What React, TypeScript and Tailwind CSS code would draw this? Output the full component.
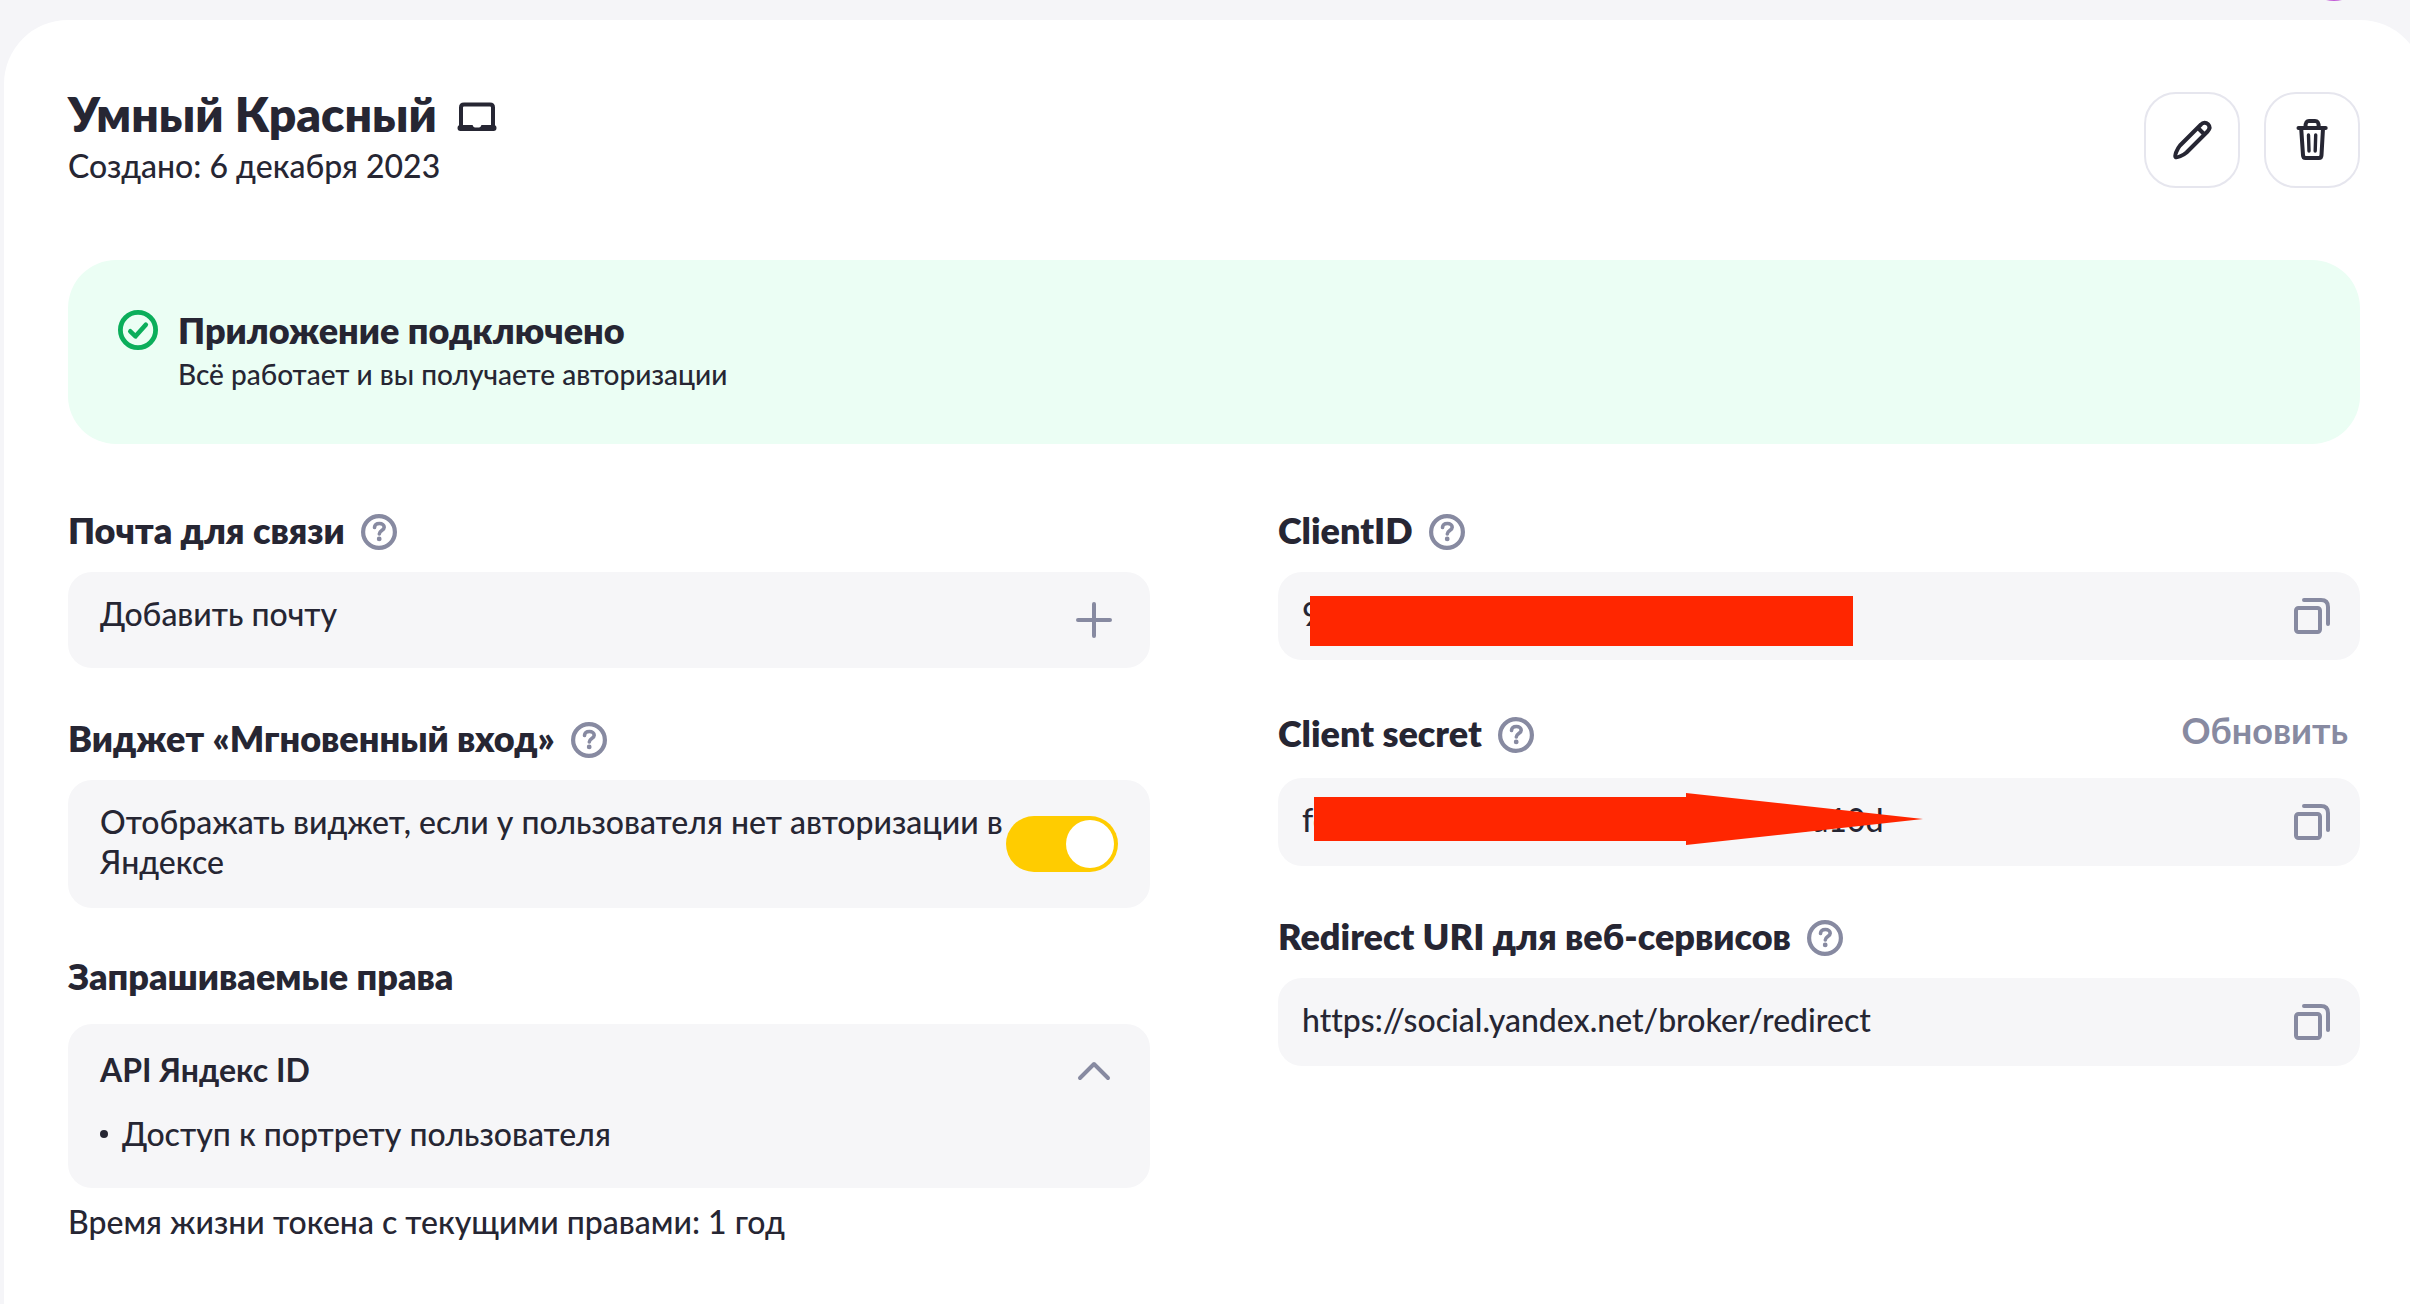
import { useId, useState } from "react";
import type { ReactNode } from "react";

function LaptopIcon() {
  return (
    <svg viewBox="0 0 48 48" className="mt-1.5 size-12 shrink-0" fill="none" aria-hidden="true">
      <path d="M8 34V14.5Q8 11.5 11 11.5H37Q40 11.5 40 14.5V34" stroke="currentColor" strokeWidth="4" />
      <path d="M7.500 32H19.500Q20.500 34.500 22 34.500H26Q27.500 34.500 28.500 32H40.500Q43.500 32 43.500 35T40.500 38H7.500Q4.500 38 4.500 35T7.500 32Z" fill="currentColor" />
    </svg>
  );
}

function PencilIcon() {
  return (
    <svg viewBox="0 0 48 48" className="size-12" fill="none" stroke="currentColor" strokeWidth="4" strokeLinecap="round" strokeLinejoin="round" aria-hidden="true">
      <path d="M7.500 41C6.500 39.500 9 33 12 29.500L33 8.500C35 6.200 38 6.200 40 8.200C42 10.300 42 13 39.500 15.500L18.500 36.500C15 39.500 9 42 7.500 41Z" />
      <path d="M30.500 12.500L35.500 17.500" />
    </svg>
  );
}

function TrashIcon() {
  return (
    <svg viewBox="0 0 48 48" className="size-12" fill="none" stroke="currentColor" strokeWidth="4" strokeLinecap="round" strokeLinejoin="round" aria-hidden="true">
      <path d="M10.500 12H37.700" />
      <path d="M17.500 11C17.500 6.500 18.500 5 21 5H27C29.700 5 30.700 6.500 30.700 11" />
      <path d="M13.200 12.500L15 39Q15.200 42 17.500 42H31Q33.300 42 33.500 39L35 12.500" />
      <path d="M20.500 19L21 35M27.700 19L27.200 35" strokeWidth="3.400" />
    </svg>
  );
}

function CheckIcon() {
  return (
    <svg viewBox="-2 -2 44 44" className="size-11 shrink-0 text-[#0bae5b]" fill="none" stroke="currentColor" strokeLinecap="round" strokeLinejoin="round" aria-hidden="true">
      <circle cx="20" cy="20" r="17.600" strokeWidth="4.800" />
      <path d="M12.300 21.300L17.500 26.300L27.800 14.700" strokeWidth="4.600" />
    </svg>
  );
}

function CopyIcon() {
  return (
    <svg viewBox="0 0 48 48" className="size-12" fill="none" stroke="currentColor" strokeWidth="4" strokeLinecap="round" aria-hidden="true">
      <rect x="8" y="16" width="24" height="24" rx="2.500" />
      <path d="M16 8H33Q40 8 40 15V32" />
    </svg>
  );
}

function PlusIcon() {
  return (
    <svg viewBox="0 0 48 48" className="size-12 shrink-0 text-[#878aa1]" fill="none" stroke="currentColor" strokeWidth="4" strokeLinecap="round" aria-hidden="true">
      <path d="M8 24H40M24 8V40" />
    </svg>
  );
}

function ChevronIcon({ open }: { open: boolean }) {
  return (
    <svg viewBox="0 0 48 48" className={open ? "size-12 text-[#878aa1]" : "size-12 rotate-180 text-[#878aa1]"} fill="none" stroke="currentColor" strokeWidth="4" strokeLinecap="round" strokeLinejoin="round" aria-hidden="true">
      <path d="M10 30L24 16L38 30" />
    </svg>
  );
}

function HelpButton({ topic }: { topic: string }) {
  return (
    <button type="button" aria-label={`Подсказка: ${topic}`} className="shrink-0 text-[#878aa1]">
      <svg viewBox="0 0 36 36" className="size-9" fill="none" stroke="currentColor" strokeLinecap="round" aria-hidden="true">
        <circle cx="18" cy="18" r="15.900" strokeWidth="4.200" />
        <path d="M13.500 13.500C13.700 10.800 15.700 9.500 18.400 9.500C21.300 9.500 23.200 11 23.200 13.300C23.200 16.500 18.300 16.700 18.300 20" strokeWidth="3.600" />
        <circle cx="18.200" cy="24.900" r="2.400" fill="currentColor" stroke="none" />
      </svg>
    </button>
  );
}

function Heading({ htmlFor, children }: { htmlFor?: string; children: string }) {
  return (
    <div className="flex min-h-12 items-center gap-4">
      <h2 className="pb-1 text-4xl leading-11 font-extrabold">
        {htmlFor ? <label htmlFor={htmlFor}>{children}</label> : children}
      </h2>
      <HelpButton topic={children} />
    </div>
  );
}

function ActionButton({ label, children }: { label: string; children: ReactNode }) {
  return (
    <button type="button" aria-label={label} className="flex size-24 items-center justify-center rounded-[32px] border-2 border-[#e6e6ee]">
      {children}
    </button>
  );
}

function CopyField({ title, value, action, cover }: { title: string; value: string; action?: ReactNode; cover?: ReactNode }) {
  const id = useId();
  return (
    <section className="flex flex-col gap-4">
      <div className="flex items-center justify-between">
        <Heading htmlFor={id}>{title}</Heading>
        {action}
      </div>
      <div className="relative flex items-center gap-4 rounded-3xl bg-[#f6f6f8] px-6 py-5">
        <input id={id} readOnly value={value} className="min-w-0 flex-1 bg-transparent pb-1 text-[32px] leading-10 font-medium outline-none" />
        <button type="button" aria-label={`Скопировать ${title}`} className="text-[#878aa1]">
          <CopyIcon />
        </button>
        {cover}
      </div>
    </section>
  );
}

export default function App() {
  const [instant, setInstant] = useState(true);
  const [open, setOpen] = useState(true);

  return (
    <div className="relative flex min-h-screen overflow-hidden bg-[#f5f5f8] pt-5 pl-1 font-['Lato','Noto_Sans',sans-serif] text-[#262633] [font-variant-ligatures:none]">
      <div className="absolute -top-[63px] right-11 size-16 rounded-full bg-[#c45fd8]" />
      <main className="-mr-3.5 flex-1 rounded-t-[64px] bg-white p-16">
        <header className="flex min-h-28 items-center justify-between">
          <div>
            <div className="flex items-center gap-4">
              <h1 className="text-5xl leading-15 font-extrabold">Умный Красный</h1>
              <LaptopIcon />
            </div>
            <p className="mt-0.5 mb-2.5 text-[32px] leading-10 font-medium">Создано: 6 декабря 2023</p>
          </div>
          <div className="flex gap-6">
            <ActionButton label="Редактировать"><PencilIcon /></ActionButton>
            <ActionButton label="Удалить"><TrashIcon /></ActionButton>
          </div>
        </header>

        <section className="mt-16 flex gap-4.5 rounded-[48px] bg-[#ebfef4] px-12 pt-12 pb-12.5">
          <CheckIcon />
          <div>
            <h2 className="text-4xl leading-11 font-extrabold">Приложение подключено</h2>
            <p className="mt-0.5 text-[28px] leading-10 font-medium">Всё работает и вы получаете авторизации</p>
          </div>
        </section>

        <div className="mt-16 grid grid-cols-2 items-start gap-32">
          <div className="flex flex-col gap-12">
            <section className="flex flex-col gap-4">
              <Heading>Почта для связи</Heading>
              <button type="button" className="flex items-center justify-between rounded-3xl bg-[#f6f6f8] px-8 py-5.5 text-left">
                <span className="pb-3 text-[32px] leading-10 font-medium">Добавить почту</span>
                <PlusIcon />
              </button>
            </section>

            <section className="flex flex-col gap-4">
              <Heading>Виджет «Мгновенный вход»</Heading>
              <div className="flex items-center rounded-3xl bg-[#f6f6f8] px-8 py-5.5">
                <label htmlFor="instant" className="flex-1 pb-1 text-[32px] leading-10 font-medium">
                  Отображать виджет, если у пользователя нет авторизации в Яндексе
                </label>
                <input
                  id="instant"
                  type="checkbox"
                  role="switch"
                  checked={instant}
                  onChange={(e) => setInstant(e.target.checked)}
                  className="flex h-14 w-28 shrink-0 appearance-none rounded-full bg-[#c8c9d4] p-1 before:size-12 before:rounded-full before:bg-white checked:justify-end checked:bg-[#ffcc00]"
                />
              </div>
            </section>

            <section>
              <h2 className="pb-1 text-4xl leading-10 font-extrabold">Запрашиваемые права</h2>
              <div className="mt-6 rounded-3xl bg-[#f6f6f8] px-8 pt-6 pb-8.5">
                <button type="button" aria-expanded={open} onClick={() => setOpen(!open)} className="flex w-full items-center justify-between text-left">
                  <span className="pb-1 text-[32px] leading-10 font-bold">API Яндекс ID</span>
                  <ChevronIcon open={open} />
                </button>
                {open && (
                  <ul className="mt-4.5 text-[32px] leading-10 font-medium">
                    <li className="flex items-center gap-3.5">
                      <span className="size-2 rounded-full bg-[#262633]" />
                      Доступ к портрету пользователя
                    </li>
                  </ul>
                )}
              </div>
              <p className="mt-3.5 text-[32px] leading-10 font-medium">Время жизни токена с текущими правами: 1 год</p>
            </section>
          </div>

          <div className="flex flex-col gap-12">
            <CopyField
              title="ClientID"
              value="9"
              cover={<div className="absolute top-6 left-8 h-[50px] w-[543px] bg-[#ff2600]" />}
            />
            <CopyField
              title="Client secret"
              value="fe00000000000000000000000000a10d"
              action={
                <button type="button" className="px-3 pb-2.5 text-4xl leading-11 font-bold text-[#878aa1]">Обновить</button>
              }
              cover={
                <svg viewBox="0 0 609 52" className="absolute top-[15px] left-9 h-[52px] w-[609px]" aria-hidden="true">
                  <path d="M0 4H372V0L609 26L372 52V48H0Z" fill="#ff2600" />
                </svg>
              }
            />
            <CopyField title="Redirect URI для веб-сервисов" value="https://social.yandex.net/broker/redirect" />
          </div>
        </div>
      </main>
    </div>
  );
}
